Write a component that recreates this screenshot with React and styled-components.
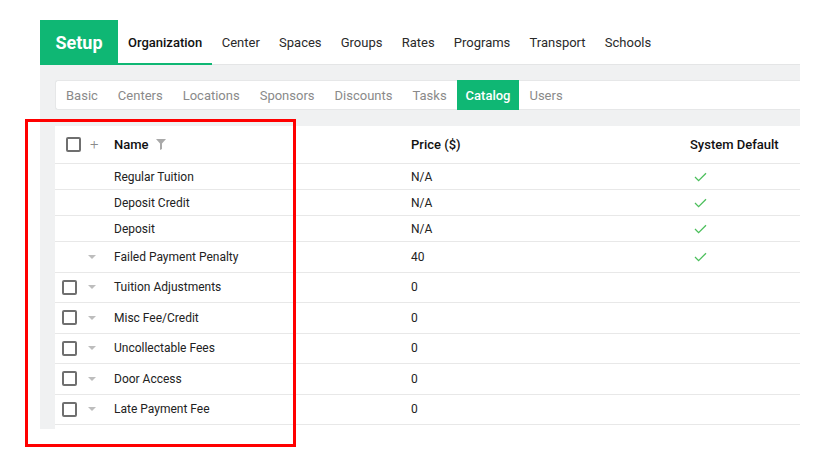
import styled, { createGlobalStyle } from "styled-components";

const GlobalStyle = createGlobalStyle`
  body {
    margin: 0;
    background: #ffffff;
    font-family: Roboto, "Liberation Sans", Arial, sans-serif;
  }
`;

const GREEN = "#0fb774";

const topTabs = ["Organization", "Center", "Spaces", "Groups", "Rates", "Programs", "Transport", "Schools"];
const subTabs = ["Basic", "Centers", "Locations", "Sponsors", "Discounts", "Tasks", "Catalog", "Users"];

const items = [
  { name: "Regular Tuition", price: "N/A", system: true },
  { name: "Deposit Credit", price: "N/A", system: true },
  { name: "Deposit", price: "N/A", system: true },
  { name: "Failed Payment Penalty", price: "40", system: true, caret: true },
  { name: "Tuition Adjustments", price: "0", check: true, caret: true },
  { name: "Misc Fee/Credit", price: "0", check: true, caret: true },
  { name: "Uncollectable Fees", price: "0", check: true, caret: true },
  { name: "Door Access", price: "0", check: true, caret: true },
  { name: "Late Payment Fee", price: "0", check: true, caret: true },
];

const Page = styled.div`
  position: relative;
  width: 800px;
  min-height: 471px;
  box-sizing: border-box;
  padding: 20px 0 0 40px;
`;

const TopBar = styled.div`
  display: flex;
  align-items: stretch;
  height: 44px;
  border-bottom: 1px solid #e4e5e6;
`;

const Brand = styled.div`
  width: 78px;
  display: flex;
  align-items: center;
  justify-content: center;
  background: ${GREEN};
  color: #fff;
  font-size: 18px;
  font-weight: 700;
  margin-bottom: -1px;
`;

const NavTab = styled.div`
  display: flex;
  align-items: center;
  padding: 0 ${(p) => (p.$active ? "10px" : "9.6px")};
  font-size: 13px;
  font-weight: ${(p) => (p.$active ? 500 : 400)};
  color: ${(p) => (p.$active ? "#111" : "#2a2a2a")};
  border-bottom: 2px solid ${(p) => (p.$active ? GREEN : "transparent")};
  margin-bottom: -1px;
  padding-top: 1px;
  white-space: nowrap;
`;

const Body = styled.div`
  background: #f0f1f2;
  padding: 15px 0 0 15px;
`;

const SubNav = styled.div`
  display: flex;
  height: 30px;
  background: #fff;
  border: 1px solid #e6e7e8;
  border-right: none;
  border-radius: 3px 0 0 3px;
  box-sizing: border-box;
`;

const SubTab = styled.div`
  display: flex;
  align-items: center;
  padding: 0 ${(p) => (p.$active ? "9px" : "10px")};
  margin: -1px 0;
  font-size: 13px;
  font-weight: ${(p) => (p.$active ? 500 : 400)};
  color: ${(p) => (p.$active ? "#fff" : "#8a8a8a")};
  background: ${(p) => (p.$active ? GREEN : "transparent")};
`;

const Table = styled.div`
  margin-top: 16px;
  background: #fff;
  padding-bottom: 4px;
`;

const Row = styled.div`
  display: flex;
  align-items: center;
  box-sizing: border-box;
  height: ${(p) => p.$h}px;
  border-bottom: 1px solid #e8e8e8;
  font-size: 12px;
  color: #222;
  white-space: nowrap;
`;

const HeadRow = styled(Row)`
  font-size: 13px;
  font-weight: 500;
  color: #111;
`;

const Lead = styled.div`
  width: 59px;
  box-sizing: border-box;
  padding-left: ${(p) => p.$pad}px;
  display: flex;
  align-items: center;
  gap: ${(p) => p.$gap}px;
`;

const Box = styled.span`
  width: ${(p) => p.$size}px;
  height: ${(p) => p.$size}px;
  box-sizing: border-box;
  border: 2px solid #6f6f6f;
  border-radius: 2px;
  flex: none;
`;

const Slot = styled.span`
  width: 15px;
  flex: none;
`;

const Plus = styled.span`
  color: #8a8a8a;
  font-size: 15px;
  font-weight: 300;
  line-height: 1;
`;

const Caret = styled.span`
  width: 0;
  height: 0;
  border-left: 4.5px solid transparent;
  border-right: 4.5px solid transparent;
  border-top: 4px solid #bdbdbd;
  flex: none;
`;

const NameCell = styled.div`
  width: 297px;
  display: flex;
  align-items: center;
  gap: 7px;
`;

const PriceCell = styled.div`
  width: 279px;
`;

const DefaultCell = styled.div`
  flex: 1;
  display: flex;
  align-items: center;
`;

const Highlight = styled.div`
  position: absolute;
  left: 25px;
  top: 119px;
  width: 271px;
  height: 328px;
  box-sizing: border-box;
  border: 3.5px solid #ff0000;
  pointer-events: none;
`;

const Funnel = () => (
  <svg width="10" height="11" viewBox="0 0 10 11">
    <path d="M0 0h10L6 4.5V10L4 11V4.5z" fill="#a9a9a9" />
  </svg>
);

const Check = () => (
  <svg width="13" height="10" viewBox="0 0 13 10" style={{ marginLeft: 4 }}>
    <path d="M1 5l3.6 3.6L12 1.2" fill="none" stroke="#4cbf5c" strokeWidth="1.3" />
  </svg>
);

export default function App() {
  return (
    <>
      <GlobalStyle />
      <Page>
        <TopBar>
          <Brand>Setup</Brand>
          {topTabs.map((t, i) => (
            <NavTab key={t} $active={i === 0}>
              {t}
            </NavTab>
          ))}
        </TopBar>
        <Body>
          <SubNav>
            {subTabs.map((t) => (
              <SubTab key={t} $active={t === "Catalog"}>
                {t}
              </SubTab>
            ))}
          </SubNav>
          <Table>
            <HeadRow $h={38}>
              <Lead $pad={11} $gap={9}>
                <Box $size={15} />
                <Plus>+</Plus>
              </Lead>
              <NameCell>
                Name <Funnel />
              </NameCell>
              <PriceCell>Price ($)</PriceCell>
              <DefaultCell>System Default</DefaultCell>
            </HeadRow>
            {items.map((it) => (
              <Row key={it.name} $h={it.caret ? 30.5 : 26}>
                <Lead $pad={7} $gap={11}>
                  {it.check ? <Box $size={15} /> : <Slot />}
                  {it.caret && <Caret />}
                </Lead>
                <NameCell>{it.name}</NameCell>
                <PriceCell>{it.price}</PriceCell>
                <DefaultCell>{it.system && <Check />}</DefaultCell>
              </Row>
            ))}
          </Table>
        </Body>
        <Highlight />
      </Page>
    </>
  );
}
